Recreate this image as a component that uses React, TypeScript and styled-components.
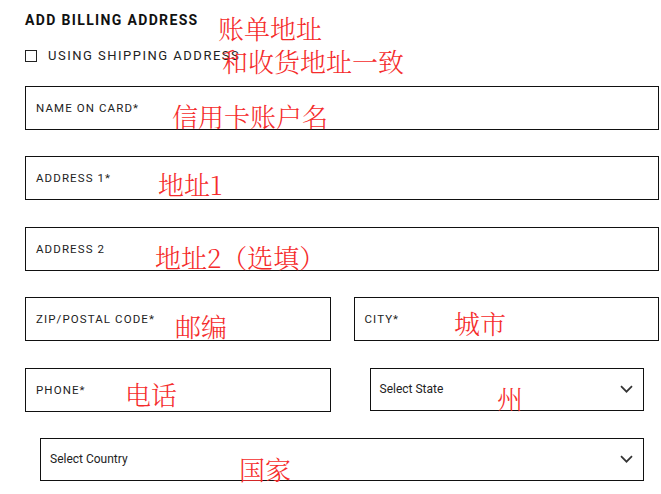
import styled, { createGlobalStyle } from "styled-components";

const GlobalStyle = createGlobalStyle`
  body {
    margin: 0;
    background: #fff;
    font-family: Roboto, "Liberation Sans", sans-serif;
  }
`;

const Page = styled.div`
  position: relative;
  width: 661px;
  height: 494px;
  box-sizing: border-box;
  padding: 12px 2px 0 25px;
  overflow: hidden;
`;

const Heading = styled.h2`
  margin: 0;
  font-size: 14px;
  line-height: 16px;
  font-weight: 700;
  letter-spacing: 1.35px;
  color: #111;
`;

const CheckRow = styled.label`
  display: flex;
  align-items: center;
  gap: 11px;
  margin-top: 20px;
  height: 16px;
`;

const CheckBox = styled.span`
  width: 12px;
  height: 12px;
  box-sizing: border-box;
  border: 1.5px solid #222;
`;

const CheckLabel = styled.span`
  font-size: 13px;
  line-height: 16px;
  letter-spacing: 1.5px;
  color: #222;
`;

const Form = styled.div`
  display: flex;
  flex-direction: column;
  gap: 26.4px;
  margin-top: 22px;
`;

const TwoCol = styled.div`
  display: grid;
  grid-template-columns: 1fr 1fr;
  column-gap: 23px;
  align-items: start;
`;

const Field = styled.div`
  height: 44px;
  box-sizing: border-box;
  border: 1px solid #111;
  display: flex;
  align-items: center;
  padding-left: 10px;
`;

const FieldLabel = styled.span`
  font-size: 11.5px;
  letter-spacing: 1.1px;
  color: #222;
`;

const SelectWrap = styled.div<{ $left?: number }>`
  padding: 0 15px 0 ${(p) => p.$left ?? 15}px;
`;

const SelectBox = styled.div`
  height: 43px;
  box-sizing: border-box;
  border: 1px solid #111;
  display: flex;
  align-items: center;
  justify-content: space-between;
  padding: 0 10px 0 9px;
`;

const SelectText = styled.span`
  font-size: 12px;
  color: #222;
`;

const Note = styled.span<{ $x: number; $y: number }>`
  position: absolute;
  left: ${(p) => p.$x}px;
  top: ${(p) => p.$y}px;
  font-family: "Noto Serif CJK SC", "Noto Sans CJK SC", serif;
  font-weight: 300;
  font-size: 26px;
  line-height: 26px;
  color: #f52b2b;
  white-space: nowrap;
`;

const Chevron = () => (
  <svg width="13" height="8" viewBox="0 0 13 8" fill="none">
    <path d="M1 1.2l5.5 5.5 5.5-5.5" stroke="#333" strokeWidth="1.7" />
  </svg>
);

const notes: [string, number, number][] = [
  ["账单地址", 218, 15],
  ["和收货地址一致", 222, 48],
  ["信用卡账户名", 172, 103],
  ["地址1", 158, 171],
  ["地址2（选填）", 155, 244],
  ["邮编", 175, 313],
  ["城市", 454, 310],
  ["电话", 125, 381],
  ["州", 497, 385],
  ["国家", 239, 456],
];

export default function App() {
  return (
    <Page>
      <GlobalStyle />
      <Heading>ADD BILLING ADDRESS</Heading>
      <CheckRow>
        <CheckBox />
        <CheckLabel>USING SHIPPING ADDRESS</CheckLabel>
      </CheckRow>
      <Form>
        <Field>
          <FieldLabel>NAME ON CARD*</FieldLabel>
        </Field>
        <Field>
          <FieldLabel>ADDRESS 1*</FieldLabel>
        </Field>
        <Field>
          <FieldLabel>ADDRESS 2</FieldLabel>
        </Field>
        <TwoCol>
          <Field>
            <FieldLabel>ZIP/POSTAL CODE*</FieldLabel>
          </Field>
          <Field>
            <FieldLabel>CITY*</FieldLabel>
          </Field>
        </TwoCol>
        <TwoCol>
          <Field>
            <FieldLabel>PHONE*</FieldLabel>
          </Field>
          <SelectWrap $left={16}>
            <SelectBox>
              <SelectText>Select State</SelectText>
              <Chevron />
            </SelectBox>
          </SelectWrap>
        </TwoCol>
        <SelectWrap>
          <SelectBox>
            <SelectText>Select Country</SelectText>
            <Chevron />
          </SelectBox>
        </SelectWrap>
      </Form>
      {notes.map(([t, x, y]) => (
        <Note key={t} $x={x} $y={y}>
          {t}
        </Note>
      ))}
    </Page>
  );
}
